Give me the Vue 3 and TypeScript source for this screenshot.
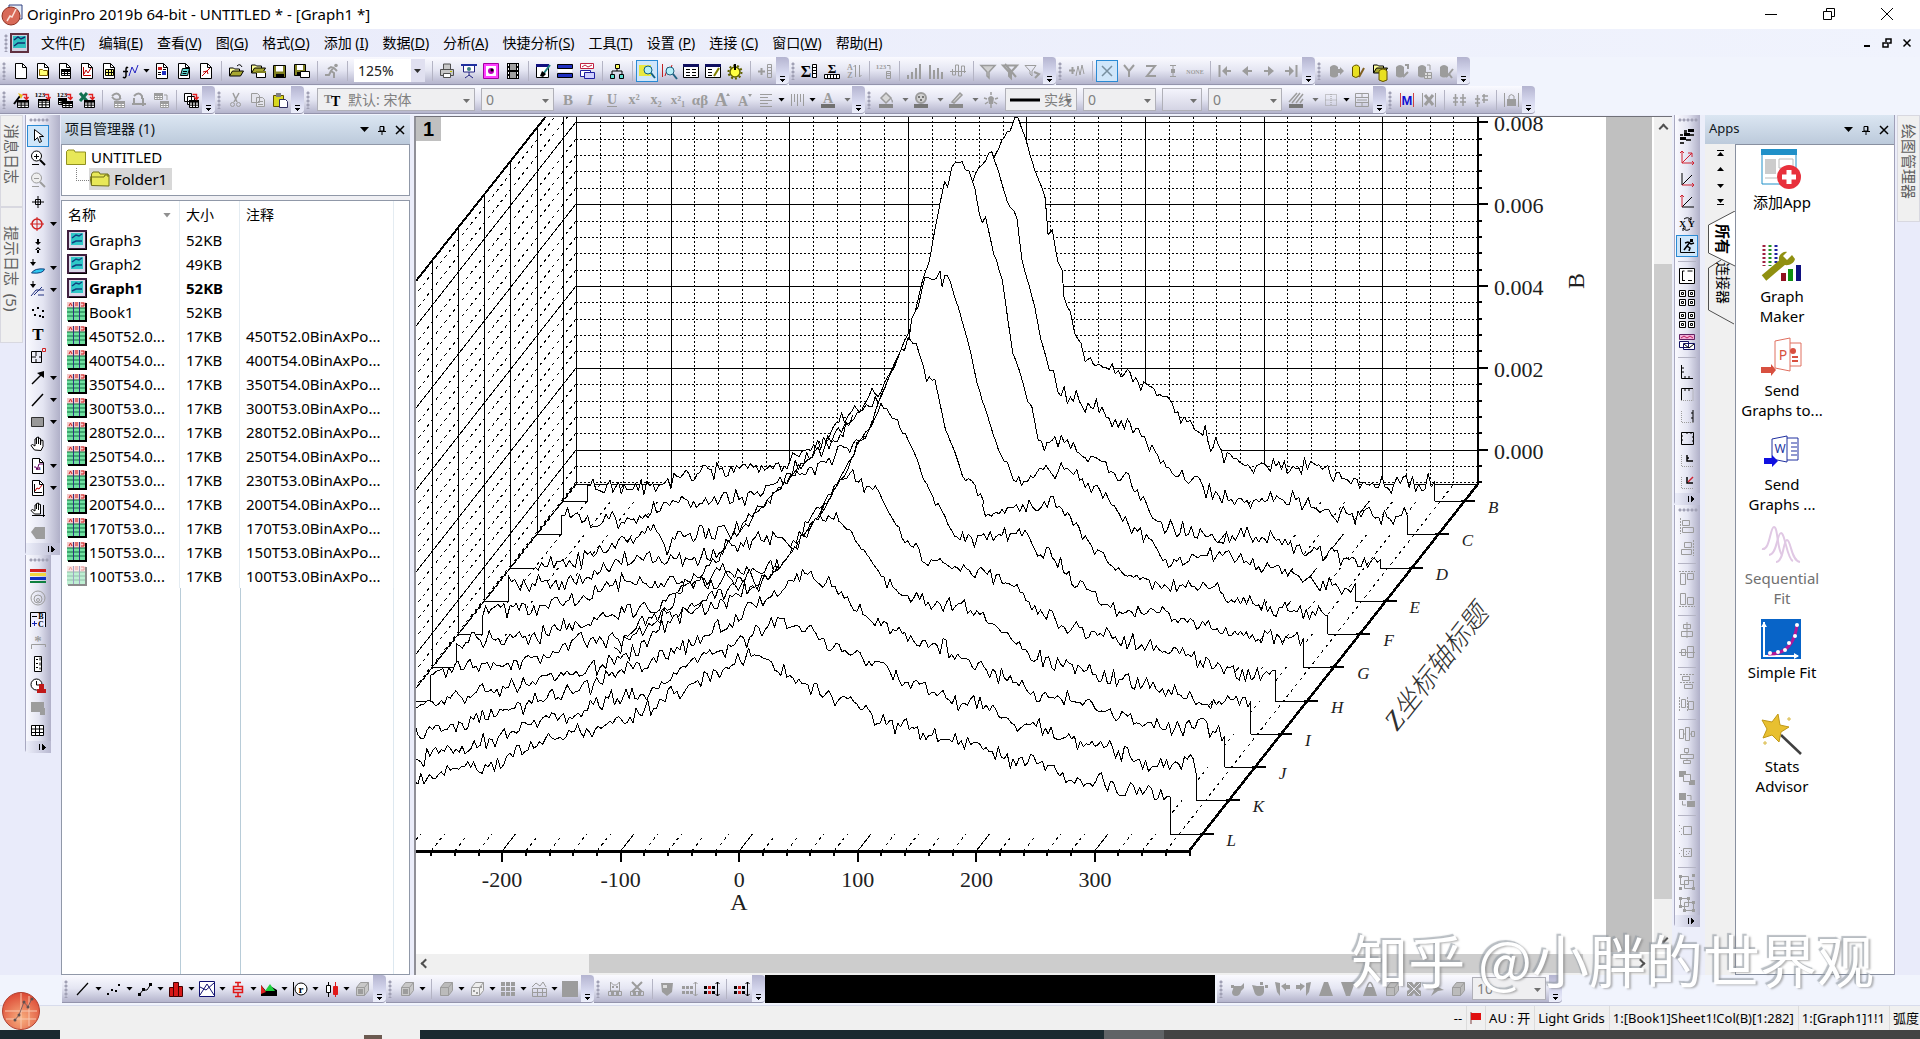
<script setup lang="ts">
type Point = [number, number]
interface Item { kind: 'btn' | 'sep' | 'combo'; icon?: string; drop?: number; on?: boolean; text?: string; w?: number; off?: boolean; lead?: string }

/* ---------- icon drawing helpers ---------- */
const G = '#9c9c9c'
const p = (d: string, stroke = '#000', fill = 'none', w = 1) => `<path d="${d}" stroke="${stroke}" fill="${fill}" stroke-width="${w}"/>`
const f = (d: string, fill = '#000') => `<path d="${d}" fill="${fill}"/>`
const t = (s: string, x: number, y: number, size: number, fill = G, extra = 'font-family="Liberation Serif, serif" font-weight="bold"') =>
  `<text x="${x}" y="${y}" font-size="${size}" fill="${fill}" text-anchor="middle" ${extra}>${s}</text>`
const page = p('M2.5.5h7l4 4v11h-11z', '#000', '#fff') + p('M9.5.5v4h4')
const table = (c: string, x = 3, y = 6, w = 10, h = 9) => {
  const l = x + 0.5, u = y + 0.5
  return p(`M${l} ${u}h${w}v${h}h-${w}zM${l} ${u + h / 3}h${w}M${l} ${u + (2 * h) / 3}h${w}M${l + w / 3} ${u}v${h}M${l + (2 * w) / 3} ${u}v${h}`, c, '#fff') + f(`M${x} ${y}h${w + 1}v2h-${w + 1}z`, c)
}
const folder = (y = 4) => p(`M1.5 ${y + 9}v-8h4l1 1h5v2`, '#000', '#ffff9c') + p(`M1.5 ${y + 9}l3-5h11l-3 5z`, '#000', '#a8a830')
const disk = (x = 1, y = 2, s = 13) => p(`M${x + 0.5} ${y + 0.5}h${s - 1}v${s - 1}h-${s - 1}z`, '#000', '#808020') + f(`M${x + 3} ${y + 1}h${s - 6}v${s / 2 - 1}h-${s - 6}z`, '#fff') + f(`M${x + 3} ${y + s - 4}h${s - 5}v4h-${s - 5}z`)
const drum = (c: string, x = 2, y = 2) => `<path d="M${x} ${y + 2}q4-4 8 0v9q-4 3-8 0z" fill="${c}"/>`
const redArrow = p('M9.5 2.5h4v5m-2.5-2.5l2.5 2.5 2-2.5', '#e02020', 'none', 1.4)
const glass = (c: string, y = 0) => `<circle cx="9" cy="${6 + y}" r="4" fill="#b8f0f8" stroke="${c}"/>` + p(`M12 ${9 + y}l4 5`, c, 'none', 2)
const axes = (c = '#000') => p('M3.5 2v11.5H15', c)
const cube = (s: string, fl: string) => p('M2.5 6.5l4-5h8v8l-4 5h-8zM2.5 6.5h8v8m0-8l4-5', s, fl)
const align = (a: string, b: string) => p(a, G) + p(b, G, 'none').replace('/>', ' stroke-dasharray="2 1"/>')
const dotsArrow = (c: string, r: string, a: string) => [2, 6, 10].map(x => f(`M${x - 1} 5h3v3h-3zM${x - 1} 10h3v3h-3z`, x === 6 ? r : c)).join('') + p('M14.5 1v14m-2-12l2-2 2 2m-4 10l2 2 2-2', a)

const icons: Record<string, string> = {
  new: page,
  folder: page + p('M4.5 12.5v-6h3l1 1h4v5z', '#806000', '#ffff70'),
  book: page + table('#000', 4, 6, 9, 6),
  graph: page + p('M4.5 4v8.5H12', '#c00000') + p('M5 11l2-4 2 3 3-5', '#c00000'),
  matrix: page + f('M4 6h9v7H4z', '#ffff80') + p('M4.5 6.5h8v6h-8zm0 3h8m-5-3v6m3-6v6'),
  fn: p('M5 5q-2-2-2 2v6q-1 3-3 1M0 8.500h5', '#000', 'none', 1.5) + p('M6 13l3-9 3 6 3-8', '#2020c0'),
  layout: page + f('M4 4h4v3H4z', '#d02020') + f('M8 8h4v4H8z', '#2030c0') + p('M4 9.500h3M4 11.500h3M9 6.500h3'),
  notes: page + p('M4.5 12.500l2-7h7l-2 7z', '#000', '#60d8d0') + p('M7 8.500h4M6.500 10.500h4'),
  image: page + p('M4 13l8-8', '#c00000') + p('M5 9l4-1 1 3', '#c00000'),
  open: folder() + p('M9 3q3-3 5 1', '#000'),
  openm: folder(1) + p('M6.500 8.500h9v6h-9z', '#000', '#fff') + f('M6 8h10v2H6z', '#808020'),
  save: disk(), saves: disk(0, 1, 12) + p('M6.500 8.500h9v6h-9z', '#000', '#fff'),
  run: p('M10 4L7 8l3 2v5M7 8l-2 4H1M4 6l3-2 3 1 3 3', G, 'none', 2) + `<circle cx="12" cy="2.500" r="1.800" fill="${G}"/>`,
  print: p('M4.500 6v-5h7v5M1.500 6.500h13v6h-13z', '#505050', '#c8c8c8') + p('M4.500 10.500h7v4h-7z', '#505050', '#fff') + f('M11 8h2v1h-2z', '#c0c000'),
  present: f('M0 1h16v2H0z', '#2030a0') + p('M2.500 3v6h11V3M8 9v3l-4 3m4-3l4 3', '#202080', '#fff') + `<circle cx="8" cy="6" r="2" fill="#408080"/>`,
  movie: p('M.5.5h15v15H.5z', '#a000a0', '#ff40ff') + f('M3 3h10v10H3z', '#fff') + `<circle cx="8" cy="8" r="3" fill="#c000c0"/><circle cx="9" cy="7" r="1.500" fill="#000"/>`,
  film: f('M2 0h12v16H2z') + f('M5 1h6v6H5zM5 9h6v6H5z', '#a0a0a0') + f('M3 1h1v2H3zM3 5h1v2H3zM3 9h1v2H3zM3 13h1v2H3zM12 1h1v2h-1zM12 5h1v2h-1zM12 9h1v2h-1zM12 13h1v2h-1z', '#fff'),
  edit: p('M1.500 1.500h12v13h-12z', '#000', '#fff') + f('M1 1h13v3H1z', '#101080') + p('M15 2L9 10', '#208080', 'none', 2) + f('M5 13l2-5 4 3-3 3z'),
  stripes: p('M.500 1.500h15v4H.500zM.500 10.500h15v4H.500z', '#000', '#2030c0') + f('M1 6h14v3H1z', '#fff'),
  windows: p('M1.500.500h13v5h-13z', '#c02040', '#fff') + p('M3 4l3-2 3 2 4-2', '#c02040') + p('M1.500 7.500h10v6h-10z', '#2020a0', '#fff') + p('M5.500 9.500h10v6h-10z', '#2020a0', '#d0d0ff'),
  tree: p('M8 4v4M3 12V8h10v4', '#000') + p('M6.500 1.500h4v4h-4z', '#000', '#ffff60') + p('M1.500 11.500h4v4h-4zM10.500 11.500h4v4h-4z', '#000', '#60e0d0'),
  explorer: f('M0 2h12v11H0z', '#e8e840') + glass('#106080', 1),
  zoomx: p('M1.500 1v13M4 13l3-9 2 4 2-6', '#c02020') + glass('#206080', 2),
  tablea: p('M.500 1.500h15v13H.500z', '#000', '#fff') + f('M0 1h16v3H0z', '#101060') + p('M3 6.500h4M3 9.500h4M3 12.500h4M9 6.500h4M9 9.500h4M9 12.500h4'),
  tableb: p('M.500 1.500h15v13H.500z', '#000', '#fff') + f('M0 1h16v3H0z', '#101060') + p('M3 6.500h4M3 9.500h4M3 12.500h4') + p('M14 5l-5 8', '#808000', 'none', 2),
  gear: `<circle cx="8" cy="9" r="5" fill="#ffff40" stroke="#606000" stroke-width="1.500"/><circle cx="8" cy="9" r="6.500" fill="none" stroke="#606000" stroke-dasharray="2 2" stroke-width="2"/>` + f('M7 1h2v6H7z'),
  addcol: p('M1 8.500h7M4.500 5v7', G, 'none', 2) + p('M10.500 1.500h4v13h-4zm0 3h4m-4 3h4m-4 3h4', G),
  sigc: t('Σ', 4, 14, 16, '#000') + p('M10.500 1.500h4v13h-4zm0 3h4m-4 3h4m-4 3h4', '#000', '#fff'),
  sigr: t('Σ', 8, 10, 13, '#000') + p('M.500 11.500h15v4H.500zm3 0v4m3-4v4m3-4v4m3-4v4', '#000', '#fff'),
  sort: t('A', 4, 7, 8) + t('Z', 4, 15, 8) + p('M9.500 14V2m-2 2l2-2M13.500 2v12m2-2l-2 2', G),
  n123: t('123', 5, 6, 7) + p('M11 2.500h3v4M10.500 8.500h4v7h-4zm0 2h4m-4 2h4', G),
  bars1: f('M1 12h2v4H1zM5 9h2v7H5zM9 5h2v11H9zM13 1h2v15h-2z', G), bars2: f('M1 2h2v14H1zM5 7h2v9H5zM9 5h2v11H9zM13 9h2v7h-2z', G),
  bars3: p('M0 8.500h16M2.500 6v6h3V2h3v11h3V3h3v7', G),
  funnel: p('M1 2.500h14L9 9v6L7 13V9z', G, '#d0d0d0', 1.500), funnelx: p('M1 2.500h14L9 9v6L7 13V9zM3 1l11 13', G, 'none', 2), funnelr: p('M1 2.500h11L8 8v5L6 11V8z', G) + p('M10 9l5 2-4 4', G, 'none', 2),
  wave: p('M0 7.500h6M3.500 4v7', G, 'none', 2) + p('M7 13l2-10 2 9 2-10 2 9', G),
  x: p('M3 3l10 10M13 3L3 13', '#7890a0', 'none', 1.500), y: p('M3 2l5 6v6M13 2L8 8', G, 'none', 2), z: p('M3 3h9L4 13h9', G, 'none', 2),
  err: p('M5 2.500h6M5 13.500h6M8 3v10', G) + f('M6 6h4v4H6z', G), none: t('NONE', 8, 11, 6),
  first: p('M2.500 2v12M14 8H6', G, 'none', 2) + f('M5 8l5-5v10z', G), prev: p('M13 8H6', G, 'none', 2) + f('M3 8l6-5v10z', G),
  next: p('M3 8h7', G, 'none', 2) + f('M13 8L7 3v10z', G), last: p('M13.500 2v12M2 8h6', G, 'none', 2) + f('M11 8L6 3v10z', G),
  db1: drum(G) + f('M9 6h3V4l4 4-4 4v-2H9z', G), dbpen: drum('#e8e020') + p('M2.500 4v9q3 3 7 0V4q-3-4-7 0z', '#605000') + p('M14 5l-5 9', '#806020', 'none', 2), dbopen: folder(1) + drum('#e8e020', 7, 6).replace('/>', ' stroke="#605000"/>'),
  dbg: drum(G) + p('M11 2h3v4M9 14l5-5', G, 'none', 2), dbt: drum(G) + p('M8.500 9.500h7v6h-7zm0 3h7m-4-3v6', G, '#ddd') + p('M11 2h3v5', G), dbx: drum(G) + p('M8 14l3-3 3 4m-3-4l4-5', G, 'none', 2),
  wiz: p('M1 12l6-8', '#000', 'none', 2) + f('M5 1l5 2-2 4z', '#e8c020') + table('#000', 4, 8, 11, 7) + redArrow,
  imp1: t('123', 5, 5, 7, '#000') + table('#000', 3, 7, 11, 8) + redArrow, imp2: t('123', 5, 5, 7, '#000') + table('#000', 1, 6, 8, 6) + table('#000', 5, 9, 10, 6) + redArrow,
  excel: p('M1 1l7 8M8 1L1 9', '#107050', 'none', 3) + table('#000', 5, 8, 10, 7) + redArrow,
  rec1: p('M3 4q5-5 8 0v3M12 6q-5 4-9-1', G, 'none', 2) + table(G, 5, 9, 10, 6), rec2: p('M3 4q5-5 8 0v3M3 6v7M12 6v8', G, 'none', 2) + p('M1 12h14', G, 'none', 2),
  rec3: table(G, 1, 1, 8, 6) + p('M11 3h3v5', G) + table(G, 7, 9, 8, 6), batch: p('M1.500 1.500h7v8h-7zM4.500 4.500h7v8h-7z', '#000', '#fff') + table('#000', 6, 8, 9, 7) + redArrow,
  cut: p('M5 1l4 9M11 1L6 10', G, 'none', 1.500) + `<circle cx="4.500" cy="12.500" r="2" fill="none" stroke="${G}"/><circle cx="10.500" cy="12.500" r="2" fill="none" stroke="${G}"/>`,
  copy: p('M1.500 1.500h6l2 2v7h-8zM6.500 5.500h6l2 2v7h-8zM8 9.500h5M8 12.500h5', G, '#e4e4ec'), paste: p('M1.500 3.500h10v11h-10z', '#605000', '#d8d820') + f('M4 1h5v4H4z', '#808080') + p('M7.500 7.500h6l2 2v6h-8z', '#303060', '#fff'),
  bold: t('B', 8, 13, 15), ital: t('I', 8, 13, 15, G, 'font-family="Liberation Serif, serif" font-style="italic" font-weight="bold"'), under: t('U', 8, 12, 14) + f('M3 14h10v1H3z', G),
  sup: t('x²', 8, 12, 14), sub: t('x₂', 8, 12, 14), supsub: t('x²₁', 8, 12, 13), greek: t('αβ', 8, 13, 15), big: t('A', 7, 14, 18) + f('M12 4l2-3 2 3z', G), small: t('A', 7, 14, 14) + f('M12 2h4l-2 3z', G),
  left: p('M2 2.500h12M2 5.500h8M2 8.500h12M2 11.500h8M2 14.500h12', G), vert: p('M2.500 2v12M5.500 2v8M8.500 2v12M11.500 2v8M14.500 2v12', G), color: t('A', 8, 11, 14) + f('M1 12h14v4H1z', '#707070'),
  bucket: p('M3 6l5-5 5 5-5 5z', G, '#d8d8d8', 1.500) + f('M13 6q3 3 1 5zM1 12h14v4H1z', '#888'), palette: `<circle cx="8" cy="6" r="5" fill="#d0d0d0" stroke="${G}" stroke-width="2"/>` + f('M1 12h14v4H1zM5 4h2v2H5zM9 4h2v2H9zM7 7h2v2H7z', '#777'),
  pen: p('M4 10l8-9 2 2-8 8z', G, '#d8d8d8', 1.500) + f('M1 12h14v4H1z', '#888'), bulb: f('M5 6q3-4 6 0l-1 6H6z', G) + p('M8 0v3M1 6l3 1m8 0l3-1M2 12l3-2m6 0l3 2M8 12v4', G, 'none', 1.500),
  hatch: p('M1 10L9 1M4 11l8-10M8 11l7-9M12 11l3-4', G, 'none', 1.500) + f('M1 12h14v4H1z', '#777'), border: p('M2.500 2.500h11v11h-11zm0 5.500h11M8 2v12', G).replace('/>', ' stroke-dasharray="1 1"/>'),
  merge: p('M1.500 1.500h13v13h-13zm0 4h13m-13 5h13M8 1v4m0 6v4M3 8h10', G),
  mask: t('M', 8, 13, 13, '#1010d0', 'font-family="Liberation Sans, sans-serif" font-weight="bold"') + p('M1.500 1v14M14.500 1v14', '#d04040'), unmask: p('M4 3l8 10M12 3L4 13', G, 'none', 3) + p('M1.500 1v14M14.500 1v14', G),
  mv1: p('M2 6h5M2 10h5M4.500 2v12M9 6h6M9 10h6M12 2v12', G, 'none', 1.500), mv2: p('M2 7h5M2 11h5M4.500 3v12M9 4h6M9 8h6M11 2v9', G, 'none', 1.500),
  lock: f('M4 7h9v7H4z', G) + p('M6 7V4q2-3 5 0v3M1.500 1v14M15.500 1v14', G),
  /* left column */
  arrow: p('M4.500 1.500v11l3-3 2 5 2-1-2-5h4z', '#000', '#fff'), zin: `<circle cx="6.500" cy="6" r="5" fill="#fff" stroke="#000"/>` + p('M10 10l5 5', '#000', 'none', 2) + p('M4 6.500h5M6.500 4v5M2 14.500h7'),
  zout: `<circle cx="6.500" cy="6" r="5" fill="#eee" stroke="${G}"/>` + p('M10 10l5 5', G, 'none', 2) + p('M4 6.500h5M2 14.500h7', G), reader: p('M8 2v12M2 8h12M5.500 5.500h5v5h-5z'),
  target: `<circle cx="7" cy="8" r="5" fill="none" stroke="#d02020" stroke-width="1.500"/>` + p('M7 1v14M0 8h14', '#d02020'), sel: f('M7 1h2v4H7zM7 11h2v4H7zM5 4h6L8 7zM5 12h6l-3-3z'),
  region: f('M0 2h6L3 6z') + p('M3 -1v4') + p('M1.500 13q3-5 13-4-1 5-13 4z', '#104080', '#30c8f0'), mask2: f('M0 2h6L3 6z') + p('M3 -1v4') + p('M1 14l5-6h8M4 13l8-8m-4 8h6', '#203080'),
  dots: f('M2 5h2v2H2zM7 3h2v2H7zM12 6h2v2h-2zM4 10h2v2H4zM9 11h2v2H9zM12 12h2v2h-2z'), text: t('T', 8, 14, 17, '#000'),
  scale: p('M1.500 3.500h10v11h-10zM6 4v4m0 3v4M2 9h4m3 0h3') + p('M12.500.500h3v3h-3z', '#d02020'), arw: p('M2 14L12 4', '#000', 'none', 1.500) + f('M14 1v7L7 3z'), line: p('M2 14L13 2', '#000', 'none', 1.500),
  rect: p('M1.500 3.500h12v9h-12z', '#303030', '#989898'), hand: p('M4.500 14L1 9.500l1.500-1L5 10V3l1.500-.5V8 1.500L8.500 1v7-6l2 .5V9l.5-5 2 .5v6l-2 4z', '#000', '#fff'),
  eqn: page + p('M4 9h2l1 3 2-6h4', '#600060') + t('a', 9, 12, 6, '#600060'), newg: page + p('M4.500 4v8.500H12', '#000') + p('M5 11l2-3 2 1 3-4', '#c00000'), hand2: p('M4.500 12L1 8.500l1.500-1L5 9V3l1.500-.5V7 1.500L8.500 1v7-6l2 .5V12z', '#000', '#fff') + p('M2 13.500h13M13.500 3v12'),
  tag: f('M1 8l4-5h10v12H6z', G), colors: f('M0 1h16v3H0z', '#d02020') + f('M0 5h16v3H0z', '#f0d840') + f('M0 9h16v3H0z', '#1030c0') + f('M0 13h16v2H0z', '#108040'),
  globe: `<circle cx="8" cy="8" r="7" fill="none" stroke="${G}"/><circle cx="8" cy="9" r="4" fill="none" stroke="${G}"/><circle cx="8" cy="10" r="1.500" fill="none" stroke="${G}"/>`,
  legend: p('M.500 15V.500h15V15', '#000', '#eef') + p('M2 4.500h5', '#000') + p('M2 11.500h5M4.500 9v5', '#1020b0') + t('B', 11, 7, 8, '#000') + t('C', 11, 15, 8, '#000'), star: t('*', 8, 12, 15) + p('M1.500 15v-4.500h14V13', G),
  ruler: p('M4.500.500h7v15h-7z', '#000', '#fff') + p('M6 3.500h2m2-2v3M6 7.500h2m2-1v3M6 11.500h2m2 0v2'), clock: `<circle cx="6.500" cy="6.500" r="5.500" fill="#fff" stroke="#000"/>` + p('M6.500 3v4h3') + f('M9 6h5v5h2v4H7v-4h2z', '#c01818'),
  blob: f('M1 2h13v6h1v7h-5v-3H1z', G), grid: p('M1.500 3.500h12v10h-12zm0 3.500h12m-12 3.500h12M5.500 3v11m4-11v11', '#000', '#fff'),
  /* right column */
  cascade: f('M9 1h6v3H9zM5 5h6v3H5zM1 9h6v3H1z') + f('M5 2h3v3H5zM11 6h4v2h-4zM1 6h3v2H1zM7 11h5v2H7zM1 14h4v2H1z', '#303030'),
  ax3: p('M3 1v12h12M3 13L13 3m-12 0l2-2 2 2m8 8l2 2-2 2M9 3h4v4', '#d02030'), axx: p('M3 1v12M3 13L13 3') + p('M3 13h12m-2-2l2 2-2 2', '#d02030'), axy: p('M3 13h12M3 13L13 3') + p('M3 13V1m-2 2l2-2 2 2', '#d02030'),
  swap: t('X', 3.5, 11, 9, '#000') + t('Y', 12.5, 11, 9, '#000') + p('M5 3q4-3 7 1m-3 0h3V1M11 13q-4 3-7-1m3 0H4v3'), runner: p('M1.500 0v14.500H16') + p('M11 4L8 8l3 2-1 3M8 8l-3 4M6 5l3-1 3 2 3-1', '#000', 'none', 1.500) + f('M11 1h3v3h-3z'),
  lay1: p('M.500.500h15v15H.500zM3.500 3v9m0-9h2m3 0h5M3 12.500h3m3 0h4', '#000', '#fff'), lay4: [0, 9].map(x => [0, 9].map(y => p(`M${x + 0.5} ${y + 0.5}h6v6h-6zm2 2h2v2h-2z`, '#000', '#fff')).join('')).join(''),
  win3: p('M.500.500h15v5H.500z', '#602060', '#f0b0d8') + p('M2 4l3-2 3 2 3-2 3 2', '#c02060') + p('M.500 7.500h9v6h-9zM4.500 9.500h11v6h-11z', '#101060', '#fff') + p('M5 10l5 4 5-4'),
  t1: p('M2.500 1v13.500H14M5 4h-2m2 4h-2m3 6v-2m4 2v-2'), t2: p('M2.500 14V2.500H14M6 3v2m4-2v2') + p('M2 14.500h12V3', G).replace('/>', ' stroke-dasharray="1 1"/>'), t3: p('M14 2v12.500M14 5h-2m2 5h-2') + p('M14 14.500H2.500V2', G).replace('/>', ' stroke-dasharray="1 1"/>'),
  t4: p('M2.500 2.500h12v12h-12z') + p('M3 6h1m-1 4h1m4-7v1m4-1v1m1 3h1m-1 4h1', '#000'), t5: p('M2.500 3v11.500H14', G).replace('/>', ' stroke-dasharray="1 1"/>') + p('M8 3v6h6M8 6h2', '#000', 'none', 1.500), t6: p('M2.500 3v11.500H14', G).replace('/>', ' stroke-dasharray="1 1"/>') + p('M8 3v6h6', '#000', 'none', 1.500) + p('M9 8l5-5', '#d02030', 'none', 1.500),
  a1: align('M3.500 2.500h7v5h-7zM3.500 9.500h11v5h-11z', 'M1.500 0v16'), a2: align('M5.500 2.500h7v5h-7zM2.500 9.500h10v5h-10z', 'M14.500 0v16'), a3: align('M1.500 3.500h5v11h-5zM8.500 3.500h6v6h-6z', 'M0 1.500h16'), a4: align('M1.500 1.500h5v11h-5zM8.500 5.500h6v7h-6z', 'M0 14.500h16'),
  a5: p('M4.500 2.500h7v4h-7zM2.500 9.500h11v5h-11zM8 0v16', G), a6: p('M2.500 5.500h4v6h-4zM8.500 2.500h6v11h-6zM0 8.500h16', G), a7: align('M3.500 2.500h7v4h-7zM5.500 10.500h8v4h-8z', 'M1 .5h14M1 8.500h14'), a8: align('M2.500 3.500h4v8h-4zM9.500 5.500h5v8h-5z', 'M.500 1v14M8.500 1v14'),
  a9: p('M.500 3.500h4v9h-4zM6.500 1.500h4v13h-4zM12.500 5.500h3v5h-3zM4 8h2m4 0h2', G), a10: p('M5.500.500h4v4h-4zM1.500 6.500h13v4h-13zM4.500 12.500h7v3h-7zM8 5v2m0 4v2', G), a11: f('M0 1h7v6H0zM10 10h6v5h-6z', G) + p('M4.500 4.500h7v7h-7z', G, '#e8e8f4'), a12: f('M0 1h7v7H0zM8 9h8v6H8z', G) + p('M8 3.500h4V8M3.500 9v4H7', G),
  g1: p('M4.500 4.500h8v8h-8z', G) + f('M0 3h1v1H0zM2 6h1v1H2zM0 9h1v1H0zM2 12h1v1H2z', G), g2: p('M4.500 4.500h8v8h-8z', G) + f('M0 3h1v1H0zM2 6h1v1H2zM0 9h1v1H0zM2 12h1v1H2zM7 7h1v1H7zM9 9h1v1H9zM7 10h1v1H7zM10 7h1v1h-1z', G),
  g3: p('M1.500 2.500h8v8h-8zM5.500 6.500h9v8h-9z', G) + f('M0 13h3v3H0zM13 0h3v3h-3zM0 1h3v3H0zM13 13h3v3h-3z', G), g4: p('M1.500 2.500h8v8h-8zM5.500 6.500h9v8h-9z', G) + f('M0 1h3v3H0zM8 1h3v3H8zM0 9h3v3H0zM13 5h3v3h-3zM13 13h3v3h-3zM4 13h3v3H4z', G),
  /* bottom */
  pline: p('M2 14L13 2', '#000', 'none', 1.200), psc: f('M1 12h2v2H1zM5 8h2v2H5zM9 9h2v2H9zM12 3h2v2h-2z'), pls: p('M2 14l4-5 4 0 4-6') + f('M1 12h3v3H1zM5 7h3v3H5zM12 2h3v3h-3z'),
  pcol: p('M1.500 6.500h4v9h-4zM10.500 5.500h4v10h-4zM5.500 1.500h5v14h-5z', '#400', '#d81818'), pbox: p('M.500.500h15v15H.500z', '#101070', '#fff') + p('M1 14L8 3l7 11M1 6l6 3 8-7', '#101070'), pstat: p('M3.500 5.500h9v6h-9zM3 8.500h10M8 1v4m0 7v4M5 1.500h6M5 15.500h6', '#e01818', 'none', 1.500),
  parea: f('M0 15V4l5 6 6-4 5 3v6z') + f('M0 13l0-9 5 7z', '#e02020') + f('M4 10l5-7 5 7z', '#20d040'), ppolar: `<circle cx="9" cy="8" r="6" fill="#fff" stroke="#000"/>` + t('r', 9, 12, 11, '#000') + p('M1.500 1v14'), pcandle: p('M3.500 4.500h4v7h-4zM5.500 1v4m0 7v4', '#000', '#fff') + p('M10.500 5.500h4v8h-4zM12.500 1v15', '#e01818', '#e01818'),
  cube: cube(G, '#c8c8c8') + f('M4 8h5v5H4z', G), cube2: cube(G, '#bbb'), dice: cube(G, '#eee') + f('M4 9h2v2H4zM7 11h2v2H7zM11 5h2v2h-2z', G), gridg: f('M1 1h4v4H1zM6 1h4v4H6zM11 1h4v4h-4zM1 6h4v4H1zM6 6h4v4H6zM11 6h4v4h-4zM1 11h4v4H1zM6 11h4v4H6zM11 11h4v4h-4z', G),
  cont: p('M1 6l4-4 4 3 3-4 3 5M1.500 7.500h14v8h-14zm0 4h14m-9-4v8m5-8v8', G), block: f('M0 0h16v16H0z', G), cat: p('M3.500 1v9h9V1l-3 3h-3zM1.500 10.500h13v4h-13z', G) + f('M5 5h2v2H5zM9 5h2v2H9zM4 11h3v3H4zM9 11h3v3H9z', G), catx: p('M3 1l10 10M13 1L3 11', G, 'none', 2) + p('M1.500 10.500h13v4h-13z', G) + f('M4 11h3v3H4zM9 11h3v3H9z', G),
  cup: f('M2 2h12l-1 9-5 4-5-4z', G) + f('M4 4h4v3H4z', '#ddd'), da1: dotsArrow(G, G, G), da2: dotsArrow('#000', '#d02020', '#000'),
  jug: f('M4 5h7l3-3v5l-3 3q-1 5-5 5t-4-4zM1 4h3v3H1z', G), jug2: f('M5 5h7v6q-1 4-5 4T2 10L0 4zM8 1h3v3H8zM13 4h3v3h-3z', G), turn1: f('M1 1l5 1v13l-3-4zM7 5l5-3v2h4v4h-4v2z', G), turn2: f('M15 1l-5 1v13l3-4zM9 5L4 2v2H0v4h4v2z', G),
  trap: f('M6 1h4l5 14H1z', G), trapd: f('M1 1h14l-5 14H6z', G), bag: f('M1 15l3-9h8l3 9z', G) + p('M5 6q3-9 6 0M4 10h8', G, 'none', 1.500), cross: f('M1 1h5l2 3 2-3h5v5l-3 2 3 2v5h-5l-2-3-2 3H1v-5l3-2-3-2z', G) + p('M2 14L14 2M2 2l12 12', '#e4e4ee'), pin: f('M1 3h6l3 3 6 3-6 1-7 5 3-6z', G),
}

const parse = (s: string): Item[] => s.split(' ').filter(Boolean).map((k): Item => {
  if (k === '|') return { kind: 'sep' }
  if (k[0] === '=') {
    const [text, w, off, lead] = k.slice(1).split(';')
    return { kind: 'combo', text: text.replace('_', ' '), w: +w, off: off === 'off', lead }
  }
  const m = /^(\w+)([>»!]*)$/.exec(k)!
  return { kind: 'btn', icon: m[1], drop: m[2] === '>' ? 9 : m[2] === '»' ? 13 : 0, on: m[2] === '!' }
})

const row1 = ['new folder book graph matrix fn> layout notes image | open openm save saves | run | =125%;71 | print present movie film | edit stripes windows | tree | explorer! zoomx tablea tableb gear | addcol',
  'sigc sigr sort | n123 | bars1 bars2 bars3 | funnel funnelx funnelr', 'wave | x! y z err none | first prev next last', 'db1 dbpen dbopen dbg dbt dbx'].map(parse)
const row2 = ['wiz imp1 imp2 excel | rec1 rec2 rec3 | batch', 'cut copy paste', '=默认:_宋体;158;off;T =0;73;off bold ital under sup sub supsub greek big small left> vert> color»',
  'bucket» palette» pen» bulb =实线;72;off;L =0;73;off =;40;off;B =0;74;off hatch» border> merge', 'mask unmask | mv1 mv2 | lock'].map(parse)
const bottomA = ['pline> psc> pls> pcol> pbox> pstat> parea> ppolar> pcandle> cube', 'cube> | cube2> dice> gridg> cont> block', 'cat catx | cup da1 da2 | da2'].map(parse)
const bottomB = [parse('jug jug2 turn1 turn2 trap trapd bag cube2 cross pin cube2 =10;74;off')]
const leftBars = ['arrow! zin zout reader target> sel region> mask2> dots text scale arw> line> rect> hand eqn> newg> hand2 tag', 'colors globe legend star ruler clock blob grid'].map(parse)
const rightBars = ['cascade ax3 axx axy swap runner! | lay1 lay4 lay4 win3 | t1 t2 t3 t4 t5 t6', 'a1 a2 | a3 a4 | a5 a6 | a7 a8 | a9 a10 a11 a12 | g1 g2 | g3 g4'].map(parse)

const menus = [['文件(', 'F'], ['编辑(', 'E'], ['查看(', 'V'], ['图(', 'G'], ['格式(', 'O'], ['添加 (', 'I'], ['数据(', 'D'], ['分析(', 'A'], ['快捷分析(', 'S'], ['工具(', 'T'], ['设置 (', 'P'], ['连接 (', 'C'], ['窗口(', 'W'], ['帮助(', 'H']]

const files = [
  ...[['Graph3', '52KB'], ['Graph2', '49KB'], ['Graph1', '52KB']].map(([name, size]) => ({ name, size, note: '', type: 'graph' })),
  { name: 'Book1', size: '52KB', note: '', type: 'book' },
  ...['450T52', '400T54', '350T54', '300T53', '280T52', '250T54', '230T53', '200T54', '170T53', '150T53', '100T53'].map(n => ({ name: n + '.0...', size: '17KB', note: n + '.0BinAxPo...', type: n === '100T53' ? 'faded' : 'book' })),
]

const apps = [
  { name: ['添加App'], svg: '<path d="M1 1h34v34H1z" fill="#fff" stroke="#2090c8"/><path d="M0 0h36v6H0z" fill="#2090c8"/><path d="M4 10h11v15H4z" fill="#ccc"/><path d="M18 10h14v9H18zM4 29h12M18 24h8" fill="none" stroke="#bbb"/><circle cx="28" cy="28" r="12" fill="#e8303c"/><path d="M28 21v14M21 28h14" stroke="#fff" stroke-width="5"/>' },
  { name: ['Graph', 'Maker'], svg: '<path d="M3 2v21" stroke="#a02040" stroke-width="3" stroke-dasharray="2 2"/><path d="M9 2v21" stroke="#209020" stroke-width="3" stroke-dasharray="2 2"/><path d="M15 2v21" stroke="#2020a0" stroke-width="3" stroke-dasharray="2 2"/><path d="M3 35l20-17" stroke="#909010" stroke-width="7"/><path d="M31 12l-5 5-4-4 4-4c-4-1-9 3-8 8 2 7 14 7 16-1z" fill="#909010"/><path d="M20 30h5v8h-5z" fill="#901020"/><path d="M27 26h5v12h-5z" fill="#109010"/><path d="M35 22h5v16h-5z" fill="#101080"/>' },
  { name: ['Send', 'Graphs to...'], svg: '<path d="M14 4l15-3v33l-15-3z" fill="#fff" stroke="#e07060"/><path d="M29 6h11v23H29" fill="none" stroke="#e07060"/><path d="M31 20h6M31 24h6" stroke="#d85040" stroke-width="2"/><circle cx="32" cy="14" r="3" fill="#d85040"/><text x="22" y="23" font-size="14" text-anchor="middle" fill="#d85040" font-family="Noto Sans">P</text><path d="M0 30h10v-3l5 6-5 6v-3H0z" fill="#d85040"/>' },
  { name: ['Send', 'Graphs ...'], svg: '<path d="M11 8l15-3v26l-15-3z" fill="#fff" stroke="#2030a0"/><path d="M26 7h11v22H26M30 12h6M30 16h6M30 20h6M30 24h6" fill="none" stroke="#2030a0"/><text x="19" y="22" font-size="12" text-anchor="middle" fill="#2030a0" font-family="Noto Sans">W</text><path d="M3 27h8v-3l6 6-6 6v-3H3z" fill="#1010e0"/>' },
  { name: ['Sequential', 'Fit'], off: true, svg: '<g fill="none" stroke="#e0c8e4" stroke-width="2"><path d="M1 24c8 2 8-22 12-22s3 22 8 28"/><path d="M8 30c8 0 8-22 12-22s6 26 12 28"/><path d="M15 37c8 0 7-22 11-22s4 21 13 22"/></g>' },
  { name: ['Simple Fit'], svg: '<path d="M0 0h40v40H0z" fill="#0864c8"/><path d="M3 3v34h34" fill="none" stroke="#fff" stroke-width="2"/><path d="M0 8l3-5 3 5zM33 34l5 3-5 3z" fill="#fff"/><path d="M7 35q25 1 29-29" fill="none" stroke="#b01898" stroke-width="3"/><g fill="#fff"><circle cx="9" cy="34" r="2"/><circle cx="17" cy="33" r="2"/><circle cx="24" cy="31" r="2"/><circle cx="28" cy="24" r="2"/><circle cx="34" cy="17" r="2"/><circle cx="36" cy="6" r="2"/></g>' },
  { name: ['Stats', 'Advisor'], svg: '<path d="M20 22l20 19" stroke="#404040" stroke-width="2.500"/><path d="M17 1l2 11 9 2-8 5-2 10-7-7-9 3 4-9-5-9 10 2z" fill="#e8c030" stroke="#c09818"/><path d="M28 4v4M26 6h4M4 28v4M2 30h4" stroke="#d8b840"/>' },
]

/* ---------- waterfall plot ---------- */
const STEP_X = 26.15
const STEP_Y = 33.26
/* Each trace is read off three sheets: u (upper left), r (upper right), l (lower). */
const sheets: Record<string, [number, number, number]> = { u: [410, 110, 2.376], r: [1000, 110, 2.376], l: [410, 500, 1.4255] }
const rawTraces = [
  'u 420,1122 445,1140 480,1132 520,1140 560,1128 610,1118 640,1100 680,1080 720,1082 760,1070 800,1062 840,1068 880,1065 900,1045 930,1025 970,1000 990,990 1010,930 1030,935 1047,900 1075,890 1095,845 1110,860 1390,130 1410,75 1443,25 r 62,100 80,180 105,260 112,350 122,360 135,460 145,480 150,560 165,610 175,670 190,700 200,745 225,752 250,785 300,785 320,820 345,825 370,840 400,880 420,910 450,935 460,975 480,980 485,945 492,1005 510,985 530,1040 560,1050 600,1072 620,1060 660,1070 700,1080 735,1055 770,1080 810,1105 860,1115 920,1125 970,1120 1030,1115',
  'l 215,45 260,60 300,60 330,50 350,20 u 600,1180 650,1170 750,1165 830,1160 870,1110 920,1070 960,1020 1000,990 1030,950 1060,910 1110,880 1335,210 1350,165 1365,155 1380,125 1402,210 r 15,280 38,325 50,450 60,500 80,590 95,690 115,780 125,785 135,845 165,855 200,885 240,890 250,920 300,935 340,990 365,1030 400,1070 430,1100 460,1100 480,1140 540,1165 600,1170 640,1170 670,1160 700,1170 730,1190 l 1300,35 1350,50 1400,50 1420,45',
  'l 177,185 230,185 260,170 300,130 350,90 365,150 380,110 420,95 460,95 490,40 u 900,1100 960,1070 1000,1040 1050,1010 1080,960 1110,900 1130,830 1180,700 1215,510 1230,460 1245,360 1258,270 1268,215 1275,230 1285,170 1300,170 1310,155 1325,180 1340,235 1350,310 1365,320 1385,430 1405,510 1430,730 1445,780 1465,870 1475,890 1490,980 1505,1000 1530,985 r 180,1020 200,1050 235,1040 270,1090 310,1120 345,1190 l 1070,75 1100,90 1150,105 1200,105 1250,130 1300,165 1350,180 1382,180',
  'l 139,250 190,250 240,245 270,215 300,180 340,170 400,180 440,150 470,130 520,105 545,125 u 1020,1120 1050,1040 1090,960 1110,900 1130,830 1160,760 1183,690 1190,620 1205,590 1215,510 1240,505 1257,480 1262,520 1275,495 1300,590 1330,730 1345,820 1370,920 1390,1000 1402,1040 r 15,1060 30,1090 55,1110 100,1080 150,1080 180,1090 200,1115 235,1140 270,1190 l 1010,50 1040,110 1060,140 1080,180 1100,170 1170,165 1200,190 1250,230 1300,250 1340,270 1346,250',
  'l 102,330 150,330 200,315 250,290 300,245 400,250 440,215 500,220 530,190 560,110 590,20 u 1060,1010 1090,960 1110,880 1130,820 1165,720 1180,705 1200,700 1225,800 1245,810 1270,960 1290,1020 1310,1090 1340,1140 1360,1170 l 815,30 835,50 850,20 890,10 920,10 940,50 970,140 1000,200 1030,235 1070,250 1100,250 1150,265 1165,300 1200,310 1250,330 1307,345',
  'l 65,430 120,415 180,410 230,370 300,330 350,325 390,260 440,240 500,230 530,190 560,110 590,20 u 1030,1100 1060,1010 1080,980 1110,910 1130,895 1150,940 1175,970 1200,1040 1225,1130 1260,1200 l 775,110 790,125 830,110 875,90 885,130 910,165 930,200 950,260 980,300 1010,335 1080,340 1120,365 1170,400 1195,420 1230,415 1272,415',
  'l 28,510 80,500 130,495 180,470 220,430 260,415 300,425 330,370 360,340 400,320 450,280 500,250 530,190 560,110 590,20 u 1020,1110 1050,1100 1070,1120 1110,1140 1130,1200 l 700,100 720,155 750,190 800,215 830,230 860,260 885,310 910,350 940,385 1000,410 1050,440 1100,470 1150,495 1185,520 1232,510',
  'l -9,625 10,615 60,600 110,570 160,560 200,520 240,520 290,480 320,450 370,360 410,330 450,300 500,250 530,190 560,110 580,60 595,55 610,60 625,100 650,160 670,230 700,290 750,310 780,310 820,350 850,410 880,460 930,500 980,525 1040,550 1080,570 1110,600 1140,625 1160,600 1185,595 1197,605',
  'l -46,710 10,695 60,680 110,640 160,620 210,580 260,560 300,500 350,480 400,430 450,370 480,320 510,290 530,270 550,230 570,220 600,260 640,340 700,400 750,435 800,480 850,540 900,590 940,600 980,630 1030,665 1080,690 1130,680 1160,710',
  'l -83,810 10,780 60,745 120,715 180,670 230,650 290,590 340,585 370,540 400,480 430,460 470,430 500,390 527,350 545,380 570,375 585,430 610,445 640,480 670,490 700,540 750,580 780,610 820,610 860,670 900,680 950,730 1000,750 1060,800 1090,785 1115,780 1119,820',
  'l -120,900 10,850 60,810 110,800 150,760 200,720 250,690 300,660 350,610 400,550 440,510 470,480 485,460 510,480 540,530 600,590 640,620 690,690 710,670 730,700 780,720 820,750 850,780 900,790 950,860 980,840 1010,870 1030,860 1060,890 1082,890',
]
const crossRaw = 'l 290,455 330,390 370,310 390,260 430,190 460,110 490,50 500,20 u 880,1130 920,1080 960,1030 990,1000 1020,970 1040,945 1050,915'

const readTrace = (raw: string): Point[] => {
  let s = sheets.u
  const out: Point[] = []
  for (const tok of raw.split(' ')) {
    if (sheets[tok]) { s = sheets[tok]; continue }
    const [x, y] = tok.split(',').map(Number)
    out.push([s[0] + x / s[2], s[1] + y / 3])
  }
  return out
}
const jitter = (n: number) => { const v = Math.sin(n * 127.1) * 43758.5453; return (v - Math.floor(v)) * 2 - 1 }
const roughen = (pts: Point[], seed: number): string => {
  const out: string[] = []
  let n = seed * 997
  for (let i = 0; i < pts.length - 1; i++) {
    const [x0, y0] = pts[i], [x1, y1] = pts[i + 1]
    const dx = x1 - x0, slope = Math.abs((y1 - y0) / (dx || 1))
    const amp = slope > 1.6 ? 1 : slope > 0.9 ? 4 : 6
    const steps = Math.max(1, Math.round(Math.abs(dx) / 3))
    for (let j = 0; j < steps; j++) {
      const q = j / steps, r = jitter(n++)
      out.push(`${(x0 + dx * q).toFixed(1)} ${(y0 + (y1 - y0) * q + r * Math.sqrt(Math.abs(r)) * amp * 1.5).toFixed(1)}`)
    }
  }
  const e = pts[pts.length - 1]
  out.push(`${e[0].toFixed(1)} ${e[1].toFixed(1)}`)
  return out.join('L')
}
const traces = rawTraces.map((raw, k) => {
  const pts = readTrace(raw)
  const base = Math.round(501 + STEP_Y * k)
  const x0 = pts[0][0], x1 = pts[pts.length - 1][0]
  return { d: `M${x0.toFixed(1)} ${base}L${roughen(pts, k + 1)}L${x1.toFixed(1)} ${base}`, base, x0, x1, wall: 562 - STEP_X * k, axis: 1474 - STEP_X * k, letter: 'BCDEFGHIJKL'[k] }
})
const crossing = 'M' + roughen(readTrace(crossRaw), 40)

const range = (n: number) => Array.from({ length: n }, (_, i) => i)
const xTicks = range(33).map(i => ({ x: 430.1 + 23.7 * i, major: (i + 2) % 5 === 0 }))
const backV = range(38).map(i => ({ x: Math.round(598.5 + 23.72 * i), major: (i + 2) % 5 === 0 })).filter(v => v.x < 1476)
const backH = range(23).map(i => ({ y: Math.round(122.3 + 16.37 * i), major: i % 5 === 0 }))
const wallDiag = range(68).map(i => ({ y: Math.round(122.3 + 16.37 * (i - 45)), major: i % 5 === 0 }))
const wallV = range(6).map(i => Math.round(562 - 26.3 * i))
const xLabels = [-200, -100, 0, 100, 200, 300].map((v, i) => ({ v, x: 501 + 118.6 * i }))
const yLabels = ['0.008', '0.006', '0.004', '0.002', '0.000'].map((v, i) => ({ v, y: 122.3 + 81.85 * i }))
</script>

<template>
  <div class="app">
    <header class="title">
      <svg class="logo" viewBox="0 0 22 22"><path d="M8 1h13v14H8z" fill="#e8eef8" stroke="#304080" /><circle cx="10" cy="12" r="9" fill="#d86a58" stroke="#903020" /><path d="M6 17l3-5 2 1 4-8" fill="none" stroke="#fbe0d8" stroke-width="1.500" /></svg>
      <h1>OriginPro 2019b 64-bit - UNTITLED * - [Graph1 *]</h1>
      <div class="wbtns">
        <button aria-label="Minimize"><svg viewBox="0 0 12 12"><path d="M0 6.500h12" stroke="#000" /></svg></button>
        <button aria-label="Restore"><svg viewBox="0 0 12 12"><path d="M.500 3.500h8v8h-8zM3.500 3V.500h8v8H9" fill="none" stroke="#000" /></svg></button>
        <button aria-label="Close"><svg viewBox="0 0 12 12"><path d="M0 0l12 12M12 0L0 12" stroke="#000" /></svg></button>
      </div>
    </header>

    <nav class="menu">
      <i class="grip"></i>
      <svg class="doc" viewBox="0 0 20 20"><path d="M1 1h17v18H1z" fill="#d0d0e0" stroke="#603040" stroke-width="2" /><path d="M3 3h13v12H3z" fill="#30c0c0" /><path d="M4 7l4-3 3 2 4-2M4 13l4-3h7" stroke="#103070" fill="none" stroke-width="1.500" /></svg>
      <button v-for="m in menus" :key="m[1]">{{ m[0] }}<u>{{ m[1] }}</u>)</button>
      <span class="mdi">
        <button aria-label="Minimize document"><svg viewBox="0 0 10 10"><path d="M2 8h6" stroke="#000" stroke-width="2" /></svg></button>
        <button aria-label="Restore document"><svg viewBox="0 0 10 10"><path d="M1 5h5v4H1zM4 4V1h5v4H7" fill="none" stroke="#000" stroke-width="1.500" /></svg></button>
        <button aria-label="Close document"><svg viewBox="0 0 10 10"><path d="M1.500 1.500l7 7M8.500 1.500l-7 7" stroke="#000" stroke-width="1.500" /></svg></button>
      </span>
    </nav>

    <div v-for="(row, ri) in [row1, row2]" :key="ri" class="row">
      <div v-for="(bar, bi) in row" :key="bi" class="bar">
        <i class="grip"></i>
        <template v-for="(it, i) in bar" :key="i">
          <i v-if="it.kind === 'sep'" class="sep"></i>
          <label v-else-if="it.kind === 'combo'" class="combo" :class="{ off: it.off, box: it.lead === 'B' }" :style="{ width: it.w + 'px' }">
            <svg v-if="it.lead === 'T'" width="22" height="20" viewBox="0 0 22 20"><text x="2" y="13" font-size="12" font-weight="bold" fill="#808080" font-family="Liberation Serif">T</text><text x="9" y="16" font-size="14" font-weight="bold" font-family="Liberation Serif">T</text></svg>
            <svg v-if="it.lead === 'L'" width="30" height="4"><path d="M0 2h30" stroke="#000" stroke-width="3" /></svg>
            <select :aria-label="'list ' + i"><option>{{ it.text }}</option></select>
          </label>
          <button v-else class="tb" :class="{ on: it.on }" :aria-label="it.icon">
            <svg viewBox="0 0 16 16" v-html="icons[it.icon!]"></svg>
          </button>
          <i v-if="it.drop" class="drop" :class="{ wide: it.drop > 9, dim: ri === 1 && it.drop > 9 }"></i>
        </template>
        <i class="cap"></i>
      </div>
    </div>

    <main>
      <aside class="tabs left">
        <button>消息日志</button>
        <button class="second">提示日志&nbsp; (5)</button>
      </aside>

      <div class="vcol lcol">
        <div v-for="(bar, bi) in leftBars" :key="bi" class="vbar" :class="{ wide: bi === 0 }">
          <i class="hgrip"></i>
          <template v-for="(it, i) in bar" :key="i">
            <span class="vrow"><button class="tb" :class="{ on: it.on }" :aria-label="it.icon"><svg viewBox="0 0 16 16" v-html="icons[it.icon!]"></svg></button><i v-if="it.drop" class="drop"></i></span>
          </template>
          <i class="vcap"></i>
        </div>
      </div>

      <section class="project">
        <h2>项目管理器 (1)<span class="pbtns"><i class="tri"></i><svg viewBox="0 0 10 10"><path d="M3 1.500h4V6H3zM1 6.500h8M5 7v3M6.500 1v5" fill="none" stroke="#000" /></svg><svg viewBox="0 0 10 10"><path d="M1 1l8 8M9 1L1 9" stroke="#000" stroke-width="1.500" /></svg></span></h2>
        <ul class="tree">
          <li><svg viewBox="0 0 20 16"><path d="M.500 15V2.500L2 1h6l1 2h10.500v12.500H.500z" fill="#e8e858" stroke="#909020" /></svg>UNTITLED</li>
          <li class="child"><i></i><span><svg viewBox="0 0 20 16"><path d="M1.500 14V3L3 1h6l1 2h8v3M1.500 14.500L0 6h14l1-2h4v11z" fill="#e8e858" stroke="#707018" /></svg>Folder1</span></li>
        </ul>
        <div class="files">
          <table>
            <thead><tr><th>名称<i class="tri grey"></i></th><th>大小</th><th>注释</th></tr></thead>
            <tbody>
              <tr v-for="fl in files" :key="fl.name" :class="{ cur: fl.name === 'Graph1' }">
                <td>
                  <svg v-if="fl.type === 'graph'" viewBox="0 0 20 20"><path d="M1 1h18v18H1z" fill="#d8d8e8" stroke="#402040" stroke-width="2" /><path d="M4 3h12v12H4z" fill="#30c8c8" /><path d="M5 8l4-3 3 1 3-2M5 13l4-2h6" fill="none" stroke="#104080" stroke-width="1.500" /><path d="M19.500 2v17.500H2" fill="none" stroke="#000" /></svg>
                  <svg v-else viewBox="0 0 20 20" :class="{ faded: fl.type === 'faded' }"><path d="M0 0h19v6H0z" fill="#f4c8c8" /><path d="M0 6h19v13H0z" fill="#70e0a0" /><path d="M0 6h19M0 10h19M0 14h19" stroke="#107040" /><path d="M6.500 0v19M12.500 0v19" stroke="#303080" /><path d="M2 4l1.500-3L5 4M8 1h3M8 3h3M14 1h3v3h-3" fill="none" stroke="#d02020" /><path d="M19 1v18H1" fill="none" stroke="#000" stroke-width="2" /></svg>
                  {{ fl.name }}
                </td>
                <td>{{ fl.size }}</td><td>{{ fl.note }}</td>
              </tr>
            </tbody>
          </table>
          <div class="rules"><i></i><i></i><i></i></div>
        </div>
      </section>

      <section class="graph">
        <div class="canvas">
          <div class="page">
            <span class="layer">1</span>
            <svg class="plot" width="1190" height="836" viewBox="415 117 1190 836">
              <defs>
                <clipPath id="wall"><path d="M576 484V100H557L415 281V688z" /></clipPath>
                <clipPath id="floor"><path d="M575 484H1477L1189 851H415V688z" /></clipPath>
              </defs>
              <g class="ln">
                <path v-for="v in backV" :key="'v' + v.x" :d="`M${v.x} 117V484`" :class="{ min: !v.major }" />
                <path v-for="h in backH" :key="'h' + h.y" :d="`M575 ${h.y}H1477`" :class="{ min: !h.major }" />
                <path d="M575 117V484H1477" />
              </g>
              <g class="ln" clip-path="url(#wall)">
                <path v-for="(w, i) in wallDiag" :key="i" :d="`M575 ${w.y}L415 ${w.y + 204}`" :class="{ diag: !w.major }" />
                <path v-for="x in wallV" :key="x" :d="`M${x} 117V700`" />
              </g>
              <g class="ln" clip-path="url(#floor)">
                <path v-for="(v, i) in xTicks" :key="i" :d="`M${v.x} 851l288-367`" :class="{ diag: !v.major }" />
                <path v-for="i in 11" :key="'f' + i" :d="`M${430 - 23.7 * i} 851l288-367`" class="diag" />
              </g>
              <g class="axis"><path d="M557 101L415 281" stroke-width="2" /><path d="M575 484L415 688" /></g>
              <g class="trace">
                <template v-for="c in traces" :key="c.letter">
                  <path :d="c.d" />
                  <path :d="`M${c.wall} ${c.base}H${c.x0}M${c.x1} ${c.base}H${c.axis}`" />
                  <path :d="`M${c.axis - 14} ${c.base}H${c.axis}`" stroke-width="2" />
                </template>
                <path :d="crossing" class="open" />
              </g>
              <g class="axis">
                <path d="M415 851H1189" stroke-width="3" /><path d="M1188 851L1477 484" stroke-width="2.500" /><path d="M1477 117V485" stroke-width="2" />
                <path v-for="(v, i) in xTicks" :key="i" :d="`M${Math.round(v.x)} 851v${v.major ? 11 : 5}`" stroke-width="2" />
                <path v-for="(h, i) in backH" :key="i" :d="`M1477 ${h.y}h${h.major ? 10 : 4}`" stroke-width="2" />
              </g>
              <g class="lab">
                <text v-for="l in xLabels" :key="l.v" :x="l.x" y="887" text-anchor="middle">{{ l.v }}</text>
                <text x="738" y="910" text-anchor="middle" class="name">A</text>
                <text v-for="l in yLabels" :key="l.v" x="1493" :y="l.y + 9">{{ l.v }}</text>
                <text transform="translate(1583 281) rotate(-90)" text-anchor="middle" class="name">B</text>
                <text v-for="(c, k) in traces" :key="c.letter" :x="1487 - STEP_X * k" :y="c.base + 12" class="slot">{{ c.letter }}</text>
                <text transform="translate(1396 732) rotate(-52)" class="ztitle">Z坐标轴标题</text>
              </g>
            </svg>
          </div>
          <div class="vscroll"><b class="up"></b><i></i><b class="down"></b></div>
        </div>
        <div class="hscroll"><b></b><i></i><b class="r"></b></div>
      </section>

      <div class="vcol rcol">
        <div v-for="(bar, bi) in rightBars" :key="bi" class="vbar">
          <i class="hgrip"></i>
          <template v-for="(it, i) in bar" :key="i">
            <i v-if="it.kind === 'sep'" class="vsep"></i>
            <span v-else class="vrow"><button class="tb" :class="{ on: it.on }" :aria-label="it.icon"><svg viewBox="0 0 16 16" v-html="icons[it.icon!]"></svg></button></span>
          </template>
          <i class="vcap"></i>
        </div>
      </div>

      <section class="apps">
        <h2>Apps<span class="pbtns"><i class="tri"></i><svg viewBox="0 0 10 10"><path d="M3 1.500h4V6H3zM1 6.500h8M5 7v3M6.500 1v5" fill="none" stroke="#000" /></svg><svg viewBox="0 0 10 10"><path d="M1 1l8 8M9 1L1 9" stroke="#000" stroke-width="1.500" /></svg></span></h2>
        <div class="abody">
          <div class="aside">
            <svg width="30" height="64" viewBox="0 0 30 64"><path d="M12 6.500h7M12 60.500h7" stroke="#000" /><path d="M12 12h7l-3.500-4zM12 27h7l-3.500-4zM12 40h7l-3.500 4zM12 55h7l-3.500 4z" /></svg>
            <svg class="shape" width="30" height="116" viewBox="0 0 30 116"><path d="M30 0L3.500 14v28L30 55z" fill="#fff" /><path d="M30 0L3.500 14v28L30 55M16 49L3.500 57v42L29 113" fill="none" stroke="#505050" /></svg>
            <button class="all">所有</button><button>连接器</button>
          </div>
          <div class="alist">
            <button v-for="(a, i) in apps" :key="i" :class="{ off: a.off }"><svg width="42" height="42" viewBox="0 0 42 42" v-html="a.svg"></svg><span v-for="n in a.name" :key="n">{{ n }}</span></button>
          </div>
        </div>
      </section>

      <aside class="tabs right"><button>绘图管理器</button></aside>
    </main>

    <div class="row bottom">
      <template v-for="(grp, gi) in [bottomA, bottomB]" :key="gi">
        <div v-if="gi === 1" class="redact"></div>
        <div v-for="(bar, bi) in grp" :key="bi" class="bar">
          <i class="grip"></i>
          <template v-for="(it, i) in bar" :key="i">
            <i v-if="it.kind === 'sep'" class="sep"></i>
            <label v-else-if="it.kind === 'combo'" class="combo off" :style="{ width: it.w + 'px' }"><select aria-label="step"><option>{{ it.text }}</option></select></label>
            <button v-else class="tb" :aria-label="it.icon"><svg viewBox="0 0 16 16" v-html="icons[it.icon!]"></svg></button>
            <i v-if="it.drop" class="drop"></i>
          </template>
          <i class="cap"></i>
        </div>
      </template>
    </div>

    <footer class="status">
      <span>--</span><span class="flag"><svg width="11" height="12" viewBox="0 0 11 12"><path d="M1 0v12" stroke="#804040" /><path d="M1 1h10v7H1z" fill="#e01010" /></svg></span><span>AU : 开</span><span>Light Grids</span><span>1:[Book1]Sheet1!Col(B)[1:282]</span><span>1:[Graph1]1!1</span><span>弧度</span>
    </footer>
    <div class="task"><i class="a"></i><i class="b"></i><i class="c"></i><i class="d"></i><i class="e"></i></div>

    <svg class="orb" viewBox="0 0 40 40"><defs><radialGradient id="orb" cx=".5" cy=".7" r=".7"><stop offset="0" stop-color="#f8b080" /><stop offset="1" stop-color="#dc4834" /></radialGradient></defs><circle cx="20" cy="20" r="18.500" fill="url(#orb)" stroke="#b04030" /><path d="M4 20h32M20 2v36M28 5v30M5 28h30" stroke="#f8c8b0" /><path d="M14 29l4-5 5-13 4 5 4-9" fill="none" stroke="#806060" /><g fill="#605050"><circle cx="14" cy="29" r="1.500" /><circle cx="18" cy="24" r="1.500" /><circle cx="23" cy="11" r="1.500" /><circle cx="27" cy="16" r="1.500" /><circle cx="31" cy="8" r="1.500" /></g></svg>
    <div class="mark">知乎 @小胖的世界观</div>
  </div>
</template>

<style>
body { margin: 0; overflow: hidden; }
</style>

<style scoped>
.app { position: relative; display: flex; flex-direction: column; height: 100vh; background: #ebedfa; color: #000; font: 14px/20px "Noto Sans", "Noto Sans CJK SC", sans-serif; overflow: hidden; }
button { border: 0; padding: 0; margin: 0; background: none; font: inherit; color: inherit; }
i { font-style: normal; display: block; flex: none; }
h1, h2, ul { margin: 0; padding: 0; font-weight: normal; list-style: none; }
.title { display: flex; align-items: center; height: 29px; background: #fff; flex: none; }
.logo { width: 22px; height: 22px; margin-left: 1px; }
h1 { font-size: 15px; line-height: 29px; margin-left: 4px; flex: 1; white-space: nowrap; }
.wbtns { display: flex; padding-right: 4px; }
.wbtns button { width: 58px; height: 29px; }
.wbtns svg { width: 12px; height: 12px; }
.menu { display: flex; align-items: center; height: 28px; gap: 14px; flex: none; background: linear-gradient(90deg, #e9ebfa, #f0f3fd); white-space: nowrap; }
.menu .grip { margin: 0 -16px 0 2px; }
.doc { width: 20px; height: 20px; margin-right: -3px; }
.mdi { margin-left: auto; display: flex; padding-right: 8px; gap: 10px; }
.mdi svg { width: 10px; height: 10px; }
.row { display: flex; height: 29px; flex: none; background: #f1f4fd; }
.bar { display: flex; align-items: center; height: 28px; border-radius: 0 4px 4px 0; background: linear-gradient(#fafaff, #e4e5f2 50%, #b4b4cc); border-bottom: 1px solid #9494ac; box-sizing: border-box; flex: none; }
.grip { width: 10px; height: 18px; background: radial-gradient(circle, #a0a0b4 1px, transparent 2px) 0 0 / 8px 4px repeat-y; }
.tb { width: 22px; height: 22px; flex: none; display: flex; align-items: center; justify-content: center; box-sizing: border-box; }
.tb svg { width: 16px; height: 16px; overflow: visible; flex: none; }
.tb.on { background: #cfe6fa; border: 1px solid #2a8ad4; }
.sep { width: 8px; height: 20px; background: linear-gradient(#b4b4c4, #b4b4c4) 4px 0 / 1px 100% no-repeat; }
.drop { width: 9px; height: 4px; background: #000; clip-path: polygon(1px 0, 8px 0, 50% 100%); }
.drop.wide { width: 13px; clip-path: polygon(5px 0, 12px 0, 65% 100%); }
.drop.dim { background: #707070; }
.cap { width: 13px; height: 27px; border-radius: 0 4px 4px 0; background: linear-gradient(#000, #000) 4px 19px / 5px 1px no-repeat, conic-gradient(from -45deg at 50% 100%, #000 90deg, transparent 0) 4px 22px / 5px 3px no-repeat, linear-gradient(#b4b4d0, #d8daf0 60%, #eceefa); }
.combo { position: relative; display: flex; align-items: center; gap: 4px; height: 23px; margin: 0 3px; background: #fff; box-sizing: border-box; padding-left: 4px; flex: none; overflow: hidden; }
.combo::after { content: ""; position: absolute; right: 4px; top: 10px; width: 7px; height: 4px; background: #303030; clip-path: polygon(0 0, 100% 0, 50% 100%); }
.combo:not(.off)::before { content: ""; position: absolute; right: 0; top: 0; width: 14px; height: 100%; background: #e0e0f0; }
.combo.off { background: #efeff1; border: 1px solid #b0b0b8; }
.combo select { appearance: none; border: 0; background: none; font: inherit; color: #202020; padding: 0; flex: 1; min-width: 0; outline: 0; }
.combo.off select { color: #808080; }
.combo.off::after { background: #707070; }
.combo.off svg { flex: none; }
.combo.box { background: linear-gradient(#f4f4fc, #d4d4e4); }

main { flex: 1; min-height: 0; display: flex; }
.tabs { width: 24px; flex: none; display: flex; flex-direction: column; align-items: flex-start; background: #e9ebfa; }
.tabs button { writing-mode: vertical-rl; text-orientation: sideways; background: #f0f0f0; border: 1px solid #d8d8e0; width: 23px; color: #606060; text-align: left; padding: 8px 0; height: 92px; box-sizing: border-box; line-height: 20px; font-size: 15px; white-space: nowrap; }
.tabs .second { height: 136px; padding-top: 18px; }
.tabs.right { width: 23px; margin-left: 2px; }
.tabs.right button { height: 107px; }
.vcol { flex: none; display: flex; flex-direction: column; }
.lcol { width: 37px; padding-left: 1px; box-sizing: border-box; background: #e9ebfa; }
.rcol { width: 33px; padding-left: 2px; box-sizing: border-box; background: #eceefa; }
.vbar { width: 26px; border-left: 1px solid #a8a8c0; border-radius: 0 0 4px 4px; box-sizing: border-box; background: linear-gradient(90deg, #fafaff, #e4e5f2 50%, #b0b0c8); }
.vbar.wide { width: 35px; }
.hgrip { height: 10px; width: 20px; margin-left: 3px; background: radial-gradient(circle, #a0a0b4 1px, transparent 2px) 0 0 / 4px 10px repeat-x; }
.vrow { display: flex; align-items: center; padding-left: 1px; height: 22px; }
.vsep { height: 8px; background: linear-gradient(#b4b4c4, #b4b4c4) 3px 4px / 18px 1px no-repeat; }
.vcap { height: 12px; background: conic-gradient(from 225deg at 100% 50%, #000 90deg, transparent 0) right 5px top 3px / 4px 6px no-repeat, linear-gradient(#000, #000) right 11px top 3px / 1px 6px no-repeat, linear-gradient(90deg, #eceefa, #b8b8d0); }

.project { width: 349px; flex: none; display: flex; flex-direction: column; font-size: 15px; background: #f0f0f4; }
h2 { height: 29px; font-size: 14px; line-height: 27px; padding-left: 4px; display: flex; background: linear-gradient(#dbe6f2, #bccadb); flex: none; color: #101820; box-sizing: border-box; }
.pbtns { margin-left: auto; display: flex; align-items: center; gap: 8px; padding-right: 5px; }
.pbtns svg { width: 10px; height: 10px; }
.tri { width: 9px; height: 5px; background: #000; clip-path: polygon(0 0, 100% 0, 50% 100%); }
.tree { border: 1px solid #9098a8; background: #fff; height: 52px; box-sizing: border-box; padding: 1px 4px; margin-bottom: 4px; flex: none; }
.tree li { display: flex; align-items: center; height: 22px; gap: 5px; }
.tree svg { width: 20px; height: 16px; }
.child i { width: 12px; height: 12px; border: 1px dotted #808080; border-width: 0 0 1px 1px; margin: -10px -5px 0 10px; }
.child span { display: flex; align-items: center; gap: 4px; background: #d8d8d8; padding: 0 5px 0 1px; height: 22px; }
.files { flex: 1; border: 1px solid #9098a8; background: #fff; display: flex; flex-direction: column; min-height: 0; }
table { border-collapse: collapse; table-layout: fixed; width: 332px; }
th { font-weight: normal; text-align: left; height: 27px; padding: 0 0 0 6px; font-size: 14px; border-right: 1px solid #e4ecf2; }
th:first-child { width: 111px; }
th:nth-child(2) { width: 53px; }
td { height: 24px; padding: 0 0 0 6px; line-height: 24px; white-space: nowrap; border-right: 1px solid #e4ecf2; }
td:first-child { padding-left: 5px; }
td svg { width: 20px; height: 20px; float: left; margin: 2px 2px 0 0; }
.faded { opacity: 0.45; }
.grey { background: #909090; width: 8px; float: right; margin: 8px 8px 0 0; }
.cur { font-weight: bold; }
.rules { flex: 1; display: flex; }
.rules i { border-right: 1px solid #b8ccd8; width: 59px; }
.rules i:first-child { width: 118px; }
.rules i:last-child { width: 152px; border-color: #dde8f0; }

.graph { flex: 1; min-width: 0; display: flex; flex-direction: column; border-left: 2px solid #909098; border-top: 1px solid #707078; margin-left: 4px; margin-top: 1px; background: #f0f0f0; }
.canvas { flex: 1; display: flex; background: #c0c0c0; min-height: 0; overflow: hidden; }
.page { position: relative; width: 1190px; background: #fff; overflow: hidden; }
.plot { display: block; }
.layer { position: absolute; left: 0; top: 0; width: 25px; height: 24px; background: #c0c0c0; font: bold 20px/24px "Liberation Sans", sans-serif; text-align: center; }
.vscroll { margin-left: auto; width: 20px; background: #f0f0f0; border-left: 2px solid #fff; display: flex; flex-direction: column; align-items: center; box-sizing: border-box; flex: none; }
.vscroll i { width: 18px; height: 76%; background: #cdcdcd; }
.vscroll b { width: 7px; height: 7px; border: 2px solid #505050; border-width: 2px 0 0 2px; transform: rotate(45deg); box-sizing: border-box; margin: 8px 0 132px; flex: none; }
.vscroll .down { transform: rotate(225deg); margin: 36px 0 0; }
.hscroll { height: 23px; display: flex; align-items: center; background: #f0f0f0; flex: none; border-top: 2px solid #fff; box-sizing: border-box; padding-bottom: 2px; }
.hscroll i { flex: 1; height: 19px; background: #cdcdcd; margin: 0 54px 0 160px; }
.hscroll b { width: 7px; height: 7px; border: 2px solid #505050; border-width: 0 0 2px 2px; transform: rotate(45deg); box-sizing: border-box; margin-left: 6px; }
.hscroll .r { transform: rotate(225deg); margin: 0 28px 0 0; }
.ln path { fill: none; stroke: #000; stroke-width: 1; shape-rendering: crispEdges; }
.ln .min { stroke-dasharray: 2 2; }
.ln .diag { stroke-dasharray: 3 4; }
.trace path { fill: #fff; stroke: #000; stroke-linejoin: round; shape-rendering: crispEdges; }
.trace .open { fill: none; }
.axis path { stroke: #000; fill: none; shape-rendering: crispEdges; }
.lab { font: 22px "Liberation Serif", "Noto Sans CJK SC", serif; fill: #202020; }
.lab .name { font-size: 24px; }
.lab .slot { font-size: 17px; font-style: italic; }
.lab .ztitle { font-size: 27px; font-style: italic; font-weight: 300; fill: #303030; }

.apps { width: 190px; flex: none; display: flex; flex-direction: column; border-right: 1px solid #a0a0b8; box-sizing: border-box; }
.apps h2 { font-size: 13px; }
.abody { flex: 1; display: flex; min-height: 0; }
.aside { position: relative; width: 30px; background: #f0f0f0; flex: none; display: flex; flex-direction: column; align-items: center; }
.aside button { position: relative; writing-mode: vertical-rl; text-orientation: sideways; font-size: 14px; line-height: 20px; height: 46px; margin-left: 6px; }
.aside button.all { font-weight: bold; font-size: 15px; height: 42px; margin-top: 10px; }
.shape { position: absolute; top: 67px; left: 0; }
.alist { flex: 1; background: #fff; border: 1px solid #8890a0; border-width: 1px 0 1px 1px; display: flex; flex-direction: column; align-items: flex-start; padding-top: 4px; overflow: hidden; }
.alist button { width: 92px; height: 94px; flex: none; display: flex; flex-direction: column; align-items: center; font-size: 15px; line-height: 20px; white-space: nowrap; }
.alist svg { margin-bottom: 1px; flex: none; }
.alist .off { color: #707070; }

.bottom { padding-left: 62px; height: 30px; }
.redact { flex: 1; background: #000; margin: 0 2px 2px 0; }
.bottom .bar:last-child { margin-right: 358px; }
.status { height: 25px; flex: none; display: flex; justify-content: flex-end; background: #f0f0f0; border-top: 1px solid #d8dcec; font-size: 13px; line-height: 24px; white-space: nowrap; box-sizing: border-box; }
.status span { padding: 0 4px 0 3px; border-left: 1px solid #dcdcdc; }
.status span:first-child { border: 0; }
.status span:last-child { padding-right: 1px; }
.flag svg { margin-top: 6px; }
.task { height: 9px; flex: none; display: flex; background: #1b2a30; }
.task i { height: 9px; }
.task .a { width: 60px; }
.task .b { width: 360px; background: linear-gradient(#6b5a50, #6b5a50) 304px 5px / 18px 4px no-repeat, #f0f0f0; }
.task .c { width: 684px; }
.task .d { width: 60px; background: #606366; }
.task .e { flex: 1; background: #444; }
.orb { position: absolute; left: 1px; bottom: 8px; width: 40px; height: 40px; }
.mark { position: absolute; right: 46px; bottom: 42px; font: 57px/78px "Noto Sans CJK SC", sans-serif; color: #fff; text-shadow: -2px -2px 1px #9098a0a0, 2px 1px 2px #80808090; white-space: nowrap; pointer-events: none; }
</style>
